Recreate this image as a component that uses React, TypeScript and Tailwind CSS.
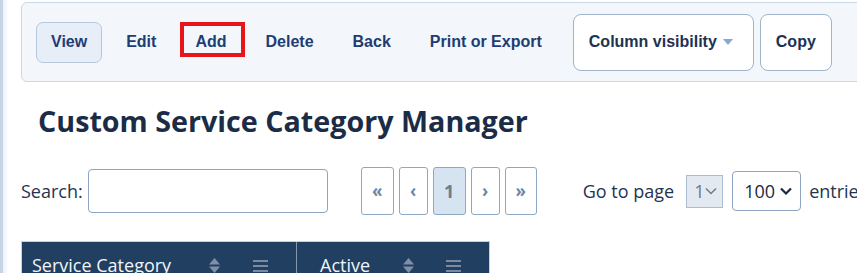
import React from 'react';

const toolbarLinks = ['View', 'Edit', 'Add', 'Delete', 'Back', 'Print or Export'];

function SortIcon() {
  return (
    <svg width="11" height="15" viewBox="0 0 11 15" className="shrink-0">
      <polygon points="5.5,0 11,6.5 0,6.5" fill="#7f90a6" />
      <polygon points="0,8.5 11,8.5 5.5,15" fill="#7f90a6" />
    </svg>
  );
}

function MenuIcon() {
  return (
    <svg width="15" height="12" viewBox="0 0 15 12" className="shrink-0">
      <rect x="0" y="0" width="15" height="2" fill="#7b8aa0" />
      <rect x="0" y="5" width="15" height="2" fill="#7b8aa0" />
      <rect x="0" y="10" width="15" height="2" fill="#7b8aa0" />
    </svg>
  );
}

function Chevron({ color, w = 2 }: { color: string; w?: number }) {
  return (
    <svg width="12" height="8" viewBox="0 0 12 8" className="shrink-0">
      <polyline points="1,1.5 6,6.5 11,1.5" fill="none" stroke={color} strokeWidth={w} />
    </svg>
  );
}

export default function App() {
  const pageBtn = 'shrink-0 h-[48px] flex items-center justify-center border border-[#8ea7c2] rounded-[3px] font-bold text-[#6d87a6]';

  return (
    <div className="flex w-[857px] h-[273px] overflow-hidden bg-white" style={{ fontFamily: '"Open Sans", "Noto Sans", sans-serif' }}>
      <div className="w-[3px] shrink-0 bg-[#c6d4e4]" />
      <div className="w-[6px] shrink-0 bg-gradient-to-r from-[#eef2f8] to-white" />
      <div className="flex-1 min-w-0 pl-[12px] overflow-hidden">
        {/* Toolbar */}
        <div
          className="mt-[2px] h-[80px] w-[860px] flex items-center pl-[14px] bg-[#f3f6fb] border border-[#cad7e6] rounded-[6px]"
          style={{ fontFamily: '"Liberation Sans", Arial, sans-serif' }}
        >
          <div className="flex items-center gap-[9px] shrink-0">
            {toolbarLinks.map((label, i) => (
              <div
                key={label}
                className={
                  'relative h-[41px] px-[14px] flex items-center rounded-[7px] border text-[16px] font-bold text-[#1f3d72] ' +
                  (i === 0 ? 'bg-[#e7eef8] border-[#b6c8dd]' : 'border-transparent')
                }
              >
                {label}
                {label === 'Add' && (
                  <span className="absolute left-[-1px] top-[-1px] w-[65px] h-[35px] border-[4px] border-[#e8141c]" />
                )}
              </div>
            ))}
          </div>
          <div className="flex items-center gap-[6px] ml-[16px] shrink-0">
            <div className="h-[57px] w-[181px] pl-[15px] flex items-center gap-[6px] bg-white border border-[#9fb4cb] rounded-[8px] text-[16px] font-bold text-[#1c3253]">
              Column visibility
              <svg width="10" height="6" viewBox="0 0 10 6">
                <polygon points="0,0 10,0 5,6" fill="#86a9d0" />
              </svg>
            </div>
            <div className="h-[57px] px-[15px] flex items-center bg-white border border-[#9fb4cb] rounded-[8px] text-[16px] font-bold text-[#1c3253]">
              Copy
            </div>
          </div>
        </div>

        {/* Title */}
        <h1 className="mt-[21px] pl-[17px] text-[28.7px] leading-[36px] font-bold text-[#1b2c47] whitespace-nowrap">
          Custom Service Category Manager
        </h1>

        {/* Search + paging */}
        <div className="mt-[28px] flex items-center whitespace-nowrap text-[18px] text-[#1f3450]">
          <span className="shrink-0">Search:</span>
          <input className="shrink-0 ml-[5px] w-[240px] h-[44px] border border-[#8ea4bf] rounded-[4px] bg-white outline-none" />
          <div className="shrink-0 ml-[33px] flex items-center gap-[5px]">
            <div className={pageBtn + ' w-[33px] text-[17px]'}>«</div>
            <div className={pageBtn + ' w-[29px] text-[17px]'}>‹</div>
            <div className={pageBtn + ' w-[33px] bg-[#d6e4f2] text-[18px] text-[#6f7c8b]'}>1</div>
            <div className={pageBtn + ' w-[29px] text-[17px]'}>›</div>
            <div className={pageBtn + ' w-[32px] text-[17px]'}>»</div>
          </div>
          <span className="shrink-0 ml-[46px]">Go to page</span>
          <div className="shrink-0 ml-[12px] h-[33px] w-[37px] flex items-center justify-between pl-[7px] pr-[5px] bg-[#e3e9f1] border border-[#a9bcd0] text-[#6b7a8b]">
            1
            <Chevron color="#6d7d8f" w={1.5} />
          </div>
          <div className="shrink-0 ml-[9px] h-[40px] w-[69px] flex items-center justify-between pl-[11px] pr-[8px] bg-white border border-[#8ea4bf] rounded-[4px] text-[#1b2a40]">
            100
            <Chevron color="#1b2a40" w={2.2} />
          </div>
          <span className="shrink-0 ml-[8px]">entries</span>
        </div>

        {/* Table header */}
        <div className="mt-[26px] w-[469px] flex border border-[#c3d1e0] bg-[#213f61] text-[18px] text-[#f1f5f9] whitespace-nowrap">
          <div className="w-[275px] h-[48px] pl-[10px] pr-[28px] pt-[10px] flex items-start border-r border-[#8197b0]">
            <span className="flex-1">Service Category</span>
            <div className="flex items-center gap-[33px] pt-[6px]">
              <SortIcon />
              <MenuIcon />
            </div>
          </div>
          <div className="flex-1 h-[48px] pl-[23px] pr-[28px] pt-[10px] flex items-start">
            <span className="flex-1">Active</span>
            <div className="flex items-center gap-[32px] pt-[6px]">
              <SortIcon />
              <MenuIcon />
            </div>
          </div>
        </div>
      </div>
    </div>
  );
}
